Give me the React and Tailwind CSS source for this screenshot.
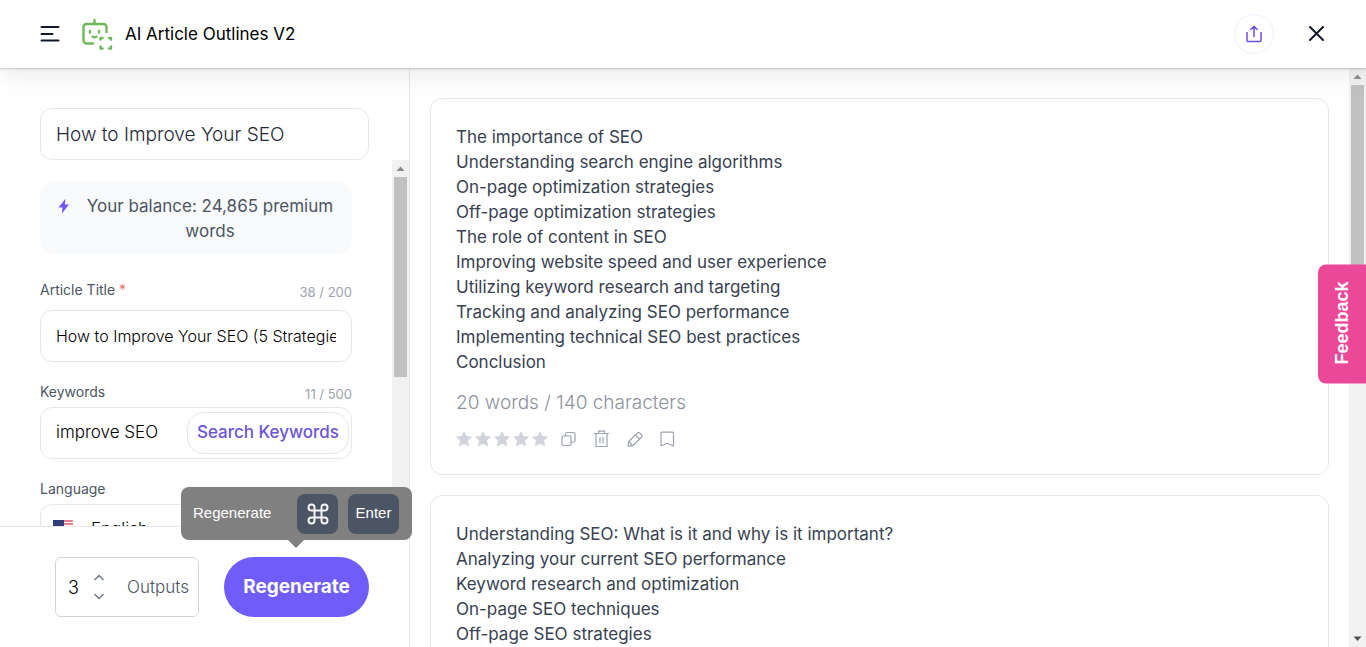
import { useState } from 'react';

const OUTLINES = [
  {
    id: 1,
    stats: '20 words / 140 characters',
    lines: [
      'The importance of SEO',
      'Understanding search engine algorithms',
      'On-page optimization strategies',
      'Off-page optimization strategies',
      'The role of content in SEO',
      'Improving website speed and user experience',
      'Utilizing keyword research and targeting',
      'Tracking and analyzing SEO performance',
      'Implementing technical SEO best practices',
      'Conclusion',
    ],
  },
  {
    id: 2,
    lines: [
      'Understanding SEO: What is it and why is it important?',
      'Analyzing your current SEO performance',
      'Keyword research and optimization',
      'On-page SEO techniques',
      'Off-page SEO strategies',
    ],
  },
];

function BotIcon() {
  return (
    <svg className="w-8 h-8" viewBox="0 0 32 32" fill="none" stroke="#6fb95b" strokeWidth="2.4" strokeLinecap="round" strokeLinejoin="round">
      <path d="M13.500 2V6" />
      <path d="M12 25.500H5.500a3 3 0 0 1-3-3V9a3 3 0 0 1 3-3h17a3 3 0 0 1 3 3v5" />
      <path d="M9 13v1.500M18 13v1.500" />
      <path d="M11.500 18.800q2 1 4 0" />
      <path d="M19.500 21.500v-1.500h2M28 20h2v1.500M30 28.500V30.500h-2M21.500 30.500h-2V28.500" />
    </svg>
  );
}

function ResultActions() {
  return (
    <div className="flex items-center text-[#9ca3af]">
      <div className="flex gap-[3px]">
        {[1, 2, 3, 4, 5].map((n) => (
          <button key={n} type="button" aria-label={`Rate ${n}`}>
            <svg className="w-4 h-4" viewBox="0 0 16 16" fill="#d1d5db" stroke="#d1d5db" strokeLinejoin="round">
              <path d="M8 1l2.200 4.500 5.100.6-3.800 3.500 1 5.100L8 12.200 3.500 14.700l1-5.100L.7 6.100l5.100-.6z" />
            </svg>
          </button>
        ))}
      </div>
      <div className="flex items-center gap-4 ml-3">
        <button type="button" aria-label="Copy">
          <svg className="w-[17px] h-[18px]" viewBox="0 0 17 18" fill="none" stroke="currentColor" strokeWidth="1.200">
            <rect x="2" y="6" width="9" height="9.500" rx="1.500" />
            <path d="M5.500 6V4a1.500 1.500 0 0 1 1.500-1.500h6.500A1.500 1.500 0 0 1 15 4v6.500a1.500 1.500 0 0 1-1.500 1.500H11" />
          </svg>
        </button>
        <button type="button" aria-label="Delete">
          <svg className="w-[17px] h-[18px]" viewBox="0 0 17 18" fill="none" stroke="currentColor" strokeWidth="1.200">
            <path d="M1 3.500h15M3 3.500v13h11v-13M5.500 3.500V1.200h6v2.300M7 7v6.200M10 7v6.200" />
          </svg>
        </button>
        <button type="button" aria-label="Edit">
          <svg className="w-[18px] h-[18px]" viewBox="0 0 18 18" fill="none" stroke="currentColor" strokeWidth="1.200" strokeLinejoin="round">
            <path d="M2 16.200l.8-4.700 8.700-8.700a1.400 1.400 0 0 1 2 0l2.200 2.200a1.400 1.400 0 0 1 0 2l-8.900 8.700zM9.500 4.800l4.200 4.200M2.800 11.500l3.900 4.200" />
          </svg>
        </button>
        <button type="button" aria-label="Save">
          <svg className="w-[15px] h-[18px]" viewBox="0 0 15 18" fill="none" stroke="currentColor" strokeWidth="1.200" strokeLinejoin="round">
            <path d="M1 3.200a1 1 0 0 1 1-1h10.500a1 1 0 0 1 1 1V16l-6.200-2.800L1 16z" />
          </svg>
        </button>
      </div>
    </div>
  );
}

function Counter({ children }) {
  return <span className="text-[13px] leading-5 text-[#9ca3af] pt-1">{children}</span>;
}

export default function App() {
  const [title, setTitle] = useState('How to Improve Your SEO');
  const [article, setArticle] = useState('How to Improve Your SEO (5 Strategies)');
  const [keywords, setKeywords] = useState('improve SEO');
  const [outputs, setOutputs] = useState(3);

  return (
    <div className="h-screen flex flex-col overflow-hidden bg-white font-[Inter,'Liberation_Sans',sans-serif] text-[#374151]">
      <header className="relative z-10 shrink-0 flex items-center h-[68px] px-10 pb-px bg-white shadow-[0_1px_2px_rgba(0,0,0,0.2),0_4px_28px_rgba(0,0,0,0.1)]">
        <button type="button" aria-label="Menu">
          <svg className="w-5 h-5" viewBox="0 0 20 20" fill="none" stroke="#111827" strokeWidth="2" strokeLinecap="round">
            <path d="M1.500 3h17M1.500 10h11M1.500 16.500h17" />
          </svg>
        </button>
        <span className="ml-[21px]"><BotIcon /></span>
        <h1 className="ml-3 text-[17px] leading-6 text-black">AI Article Outlines V2</h1>
        <button type="button" aria-label="Share" className="ml-auto flex items-center justify-center w-10 h-10 rounded-full border border-[#f0edfc] text-[#6d4fe0]">
          <svg className="w-[18px] h-[18px]" viewBox="0 0 18 18" fill="none" stroke="currentColor" strokeWidth="1.500" strokeLinecap="round" strokeLinejoin="round">
            <path d="M2 7.500v8a1 1 0 0 0 1 1h12a1 1 0 0 0 1-1v-8M9 11.500V1.500M5.800 4.500L9 1.400l3.200 3.100" />
          </svg>
        </button>
        <button type="button" aria-label="Close" className="ml-[33px]">
          <svg className="w-[19px] h-[19px]" viewBox="0 0 19 19" fill="none" stroke="#111827" strokeWidth="2" strokeLinecap="round">
            <path d="M3 3l13 13M16 3L3 16" />
          </svg>
        </button>
      </header>

      <div className="flex flex-1 min-h-0">
        <aside className="flex flex-col w-[410px] shrink-0 border-r border-[#e5e7eb]">
          <div className="shrink-0 pt-10 px-10">
            <input
              aria-label="Document name"
              value={title}
              onChange={(e) => setTitle(e.target.value)}
              className="block w-full h-[52px] px-[15px] rounded-xl border border-[#e5e7eb] text-[19px] font-light text-[#1f2937] outline-none"
            />
          </div>

          <div className="flex flex-1 min-h-0">
            <form className="flex-1 min-w-0 overflow-hidden pl-10 pr-10 pt-[21px]">
              <div className="flex items-start justify-center rounded-2xl bg-[#f9fafc] px-4 pt-[13px] pb-[11px] text-[17px] leading-[25px] text-[#4b5563]">
                <svg className="w-4 h-4 mt-1 shrink-0" viewBox="0 0 16 16" fill="#6f55f0">
                  <path d="M9.500.8L2.500 9.400h4L5.800 15.400 13 6.600H8.800z" />
                </svg>
                <p className="flex-1 ml-3 text-center">Your balance: 24,865 premium words</p>
              </div>

              <div className="flex justify-between mt-[23px]">
                <label htmlFor="article" className="text-[14px] leading-6 text-[#4b5563]">
                  Article Title <span className="text-[#ef6b6b]">*</span>
                </label>
                <Counter>38 / 200</Counter>
              </div>
              <div className="mt-2 h-[52px] px-[15px] rounded-xl border border-[#e5e7eb]">
                <input
                  id="article"
                  value={article}
                  onChange={(e) => setArticle(e.target.value)}
                  className="block w-full h-full text-[16px] font-light text-black outline-none"
                />
              </div>

              <div className="flex justify-between mt-[18px]">
                <label htmlFor="keywords" className="text-[14px] leading-6 text-[#4b5563]">Keywords</label>
                <Counter>11 / 500</Counter>
              </div>
              <div className="flex items-center gap-2 mt-[3px] h-[52px] pl-[15px] pr-0.5 rounded-xl border border-[#e5e7eb]">
                <input
                  id="keywords"
                  value={keywords}
                  onChange={(e) => setKeywords(e.target.value)}
                  className="flex-1 min-w-0 text-[17px] font-light text-black outline-none"
                />
                <button type="button" className="shrink-0 h-[42px] w-[162px] rounded-2xl border border-[#e5e7eb] text-[17px] font-medium text-[#6d55d8]">
                  Search Keywords
                </button>
              </div>

              <label htmlFor="language" className="block mt-[18px] text-[14px] leading-6 text-[#4b5563]">Language</label>
              <div className="flex items-center mt-[3px] h-[52px] px-3 rounded-xl border border-[#e5e7eb]">
                <svg className="w-5 h-[22px] shrink-0" viewBox="0 0 20 22">
                  <rect y="1" width="20" height="20" fill="#fff" />
                  <path d="M0 2h20M0 5h20M0 8h20M0 11h20M0 14h20M0 17h20M0 20h20" stroke="#e05561" strokeWidth="1.500" />
                  <rect y="1" width="11" height="11" fill="#2f3e78" />
                </svg>
                <select id="language" className="flex-1 ml-[18px] appearance-none bg-transparent text-[17px] font-light text-black outline-none">
                  <option>English</option>
                </select>
              </div>
            </form>

            <div aria-hidden="true" className="flex flex-col items-center w-[17px] shrink-0 bg-[#f1f1f1]">
              <svg className="w-[17px] h-[17px] shrink-0" viewBox="0 0 17 17" fill="#8b8b8b"><path d="M8.500 6.500l4 4.500h-8z" /></svg>
              <div className="w-[13px] h-[200px] bg-[#c1c1c1]" />
            </div>
          </div>

          <footer className="shrink-0 flex justify-between items-start h-[121px] border-t border-[#e5e7eb] pt-[30px] pl-[55px] pr-10">
            <div className="flex items-center h-[60px] w-36 px-[9px] rounded-md border border-[#d1d5db]">
              <input
                id="outputs"
                type="number"
                value={outputs}
                onChange={(e) => setOutputs(Number(e.target.value))}
                className="w-6 pl-[3px] text-[18px] font-light text-black outline-none [appearance:textfield] [&::-webkit-inner-spin-button]:appearance-none"
              />
              <div className="flex flex-col gap-2 ml-1 text-[#6b7280]">
                <button type="button" aria-label="More outputs" onClick={() => setOutputs(outputs + 1)}>
                  <svg className="w-3 h-2.5" viewBox="0 0 12 10" fill="none" stroke="currentColor" strokeWidth="1.400"><path d="M1.500 7L6 2.500 10.500 7" /></svg>
                </button>
                <button type="button" aria-label="Fewer outputs" onClick={() => setOutputs(outputs - 1)}>
                  <svg className="w-3 h-2.5" viewBox="0 0 12 10" fill="none" stroke="currentColor" strokeWidth="1.400"><path d="M1.500 3L6 7.500 10.500 3" /></svg>
                </button>
              </div>
              <label htmlFor="outputs" className="ml-auto pt-0.5 text-[17px] font-light text-[#4b5563]">Outputs</label>
            </div>

            <div className="relative">
              <button type="button" className="w-[145px] h-[60px] rounded-full bg-[#705cf8] text-[19px] font-bold text-white">
                Regenerate
              </button>
              <div role="tooltip" className="absolute z-20 right-[-43px] bottom-[77px] flex items-center h-[53px] w-[231px] pl-3 pr-[13px] rounded-lg bg-[#808080] font-['Liberation_Sans',Arial,sans-serif] text-[15px] text-white">
                Regenerate
                <kbd className="ml-auto flex items-center justify-center w-[41px] h-10 rounded-lg bg-[#4b5563]">
                  <svg className="w-6 h-6" viewBox="0 0 24 24" fill="none" stroke="#f3f4f6" strokeWidth="2">
                    <path d="M8.500 8.500h7v7h-7zM8.500 8.500H5.500a3 3 0 1 1 3-3zM15.500 8.500v-3a3 3 0 1 1 3 3zM15.500 15.500h3a3 3 0 1 1-3 3zM8.500 15.500v3a3 3 0 1 1-3-3z" />
                  </svg>
                </kbd>
                <kbd className="ml-2.5 flex items-center justify-center w-[51px] h-10 rounded-lg bg-[#4b5563] font-['Liberation_Sans',Arial,sans-serif] text-[15px]">Enter</kbd>
                <svg className="absolute top-full left-[107px] w-4 h-2" viewBox="0 0 16 8" fill="#808080"><path d="M0 0h16L8 8z" /></svg>
              </div>
            </div>
          </footer>
        </aside>

        <main className="flex-1 min-w-0 overflow-hidden pt-[30px] px-5">
          <div className="flex flex-col gap-5">
            {OUTLINES.map((item) => (
              <article key={item.id} className="px-[25px] pt-[26px] pb-[26px] rounded-xl border border-[#e5e7eb]">
                {item.lines.map((line) => (
                  <p key={line} className="text-[17px] leading-[25px] text-[#374151]">{line}</p>
                ))}
                {item.stats && <p className="mt-[15px] text-[19px] leading-[25px] font-light text-[#8b929e]">{item.stats}</p>}
                {item.stats && <div className="mt-[15px]"><ResultActions /></div>}
              </article>
            ))}
          </div>
        </main>

        <div aria-hidden="true" className="flex flex-col items-center justify-between w-[17px] shrink-0 bg-[#f1f1f1]">
          <div>
            <svg className="w-[17px] h-[17px]" viewBox="0 0 17 17" fill="#8b8b8b"><path d="M8.500 6.500l4 4.500h-8z" /></svg>
            <div className="mx-auto w-[13px] h-[240px] bg-[#c1c1c1]" />
          </div>
          <svg className="w-[17px] h-[17px]" viewBox="0 0 17 17" fill="#505050"><path d="M8.500 11l4-4.500h-8z" /></svg>
        </div>
      </div>

      <button type="button" className="fixed z-20 right-0 top-1/2 -translate-y-1/2 flex items-center justify-center w-12 h-[119px] rounded-l-lg bg-[#ec4899] font-['Liberation_Sans',Arial,sans-serif] text-[18px] font-bold text-white">
        <span className="[writing-mode:vertical-rl] rotate-180">Feedback</span>
      </button>
    </div>
  );
}
